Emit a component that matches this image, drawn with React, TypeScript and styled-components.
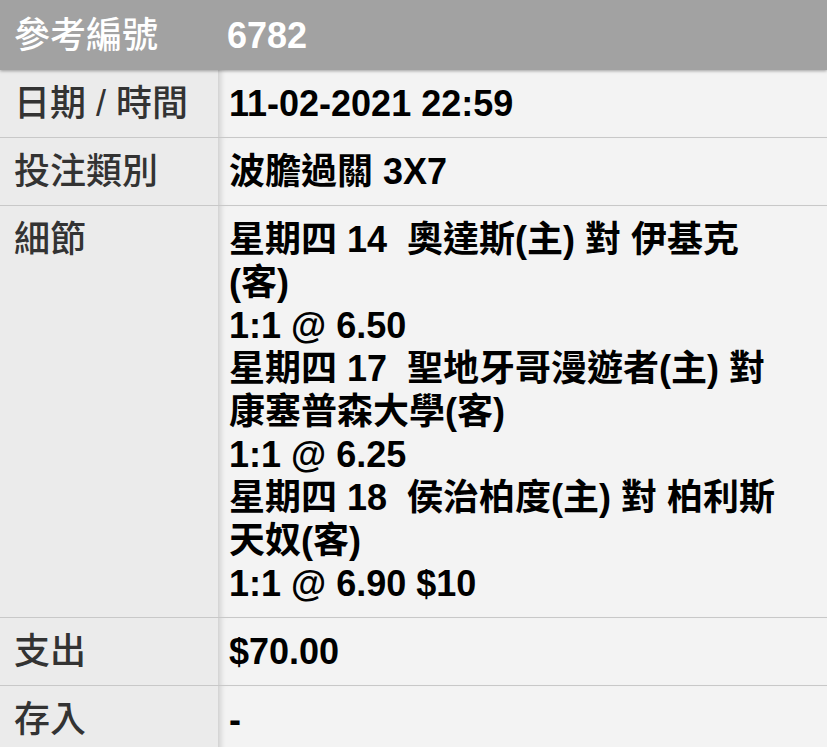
import styled, { createGlobalStyle } from "styled-components";

const GlobalStyle = createGlobalStyle`
  html, body {
    margin: 0;
    padding: 0;
    background: #f3f3f3;
  }
  body {
    font-family: "Liberation Sans", "Noto Sans CJK TC", sans-serif;
  }
`;

type Leg = { lines: string[]; odds: string };

const legs: Leg[] = [
  { lines: ["星期四 14\u00a0\u00a0奧達斯(主) 對 伊基克", "(客)"], odds: "1:1 @ 6.50" },
  { lines: ["星期四 17\u00a0\u00a0聖地牙哥漫遊者(主) 對", "康塞普森大學(客)"], odds: "1:1 @ 6.25" },
  { lines: ["星期四 18\u00a0\u00a0侯治柏度(主) 對 柏利斯", "天奴(客)"], odds: "1:1 @ 6.90 $10" },
];

const rows: { label: string; value: string }[] = [
  { label: "日期 / 時間", value: "11-02-2021 22:59" },
  { label: "投注類別", value: "波膽過關 3X7" },
];

export default function App() {
  return (
    <>
      <GlobalStyle />
      <Sheet>
        <HeaderRow>
          <HeaderLabel>參考編號</HeaderLabel>
          <HeaderValue>6782</HeaderValue>
        </HeaderRow>

        {rows.map(r => (
          <Row key={r.label}>
            <Label>{r.label}</Label>
            <Value>{r.value}</Value>
          </Row>
        ))}

        <Row>
          <Label>細節</Label>
          <Value>
            {legs.map(leg => (
              <LegBlock key={leg.odds}>
                {leg.lines.map(l => (
                  <Line key={l}>{l}</Line>
                ))}
                <Line>{leg.odds}</Line>
              </LegBlock>
            ))}
          </Value>
        </Row>

        <Row>
          <Label>支出</Label>
          <Value>$70.00</Value>
        </Row>
        <Row $last>
          <Label>存入</Label>
          <Value>-</Value>
        </Row>
      </Sheet>
    </>
  );
}

const Sheet = styled.div`
  display: flex;
  flex-direction: column;
  width: 827px;
  min-height: 747px;
  background: #f3f3f3;
  font-size: 36px;
  line-height: 43px;
`;

const HeaderRow = styled.div`
  position: relative;
  z-index: 1;
  display: grid;
  grid-template-columns: 218px 1fr;
  height: 70px;
  align-items: center;
  background: #a2a2a2;
  color: #fff;
  box-shadow: 0 1px 3px rgba(0, 0, 0, 0.35);
`;

const HeaderLabel = styled.div`
  padding-left: 14px;
  font-weight: 500;
`;

const HeaderValue = styled.div`
  padding-left: 9px;
  font-weight: 700;
`;

const Row = styled.div<{ $last?: boolean }>`
  display: grid;
  grid-template-columns: 218px 1fr;
  border-bottom: ${p => (p.$last ? "none" : "1px solid #c8c8c8")};
  flex: ${p => (p.$last ? "1" : "none")};
`;

const Label = styled.div`
  padding: 12px 14px;
  background: #ebebeb;
  color: #333;
  font-weight: 500;
`;

const Value = styled.div`
  padding: 12px 11px;
  background: #f3f3f3;
  color: #000;
  font-weight: 700;
  box-shadow: inset 7px 0 6px -5px rgba(0, 0, 0, 0.18);
  white-space: nowrap;
`;

const LegBlock = styled.div`
  display: flex;
  flex-direction: column;
`;

const Line = styled.div``;
